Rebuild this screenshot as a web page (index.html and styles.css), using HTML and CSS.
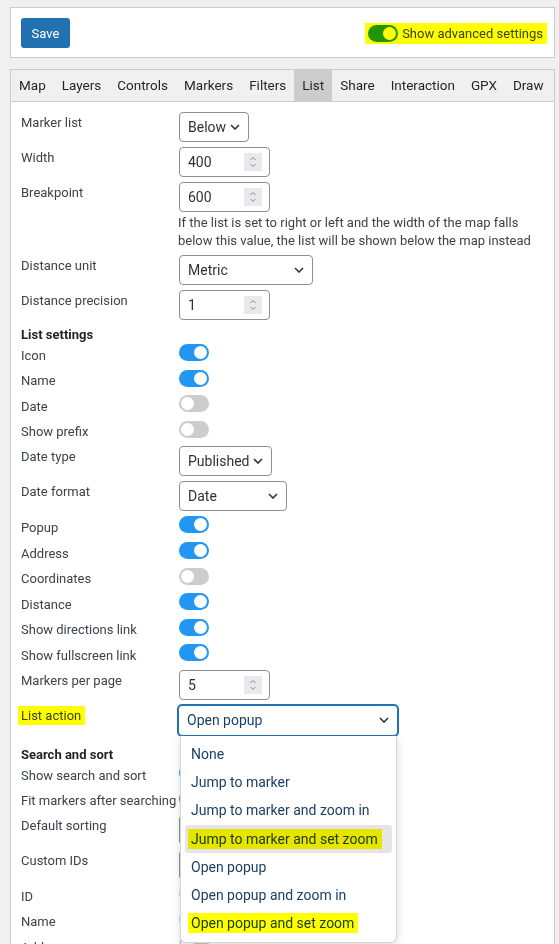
FILE: index.html
```html
<!DOCTYPE html>
<html lang="en">
<head>
    <meta charset="UTF-8">
    <meta name="viewport" content="width=device-width, initial-scale=1.0">
    <title>Map settings - List</title>
    <link rel="stylesheet" href="styles.css">
</head>
<body>

    <div class="topbar">
        <button type="button" class="btn-save">Save</button>
        <label class="advanced hl">
            <span class="switch on"></span>
            Show advanced settings
        </label>
    </div>

    <div class="panel">
        <ul class="tabs">
            <li>Map</li>
            <li>Layers</li>
            <li>Controls</li>
            <li>Markers</li>
            <li>Filters</li>
            <li class="active">List</li>
            <li>Share</li>
            <li>Interaction</li>
            <li>GPX</li>
            <li>Draw</li>
        </ul>

        <div class="tab-body">
            <div class="row">
                <div class="lbl">Marker list</div>
                <div class="select w-below"><span>Below</span><svg class="chev" width="10" height="6" viewBox="0 0 10 6"><path d="M1 1l4 4 4-4"/></svg></div>
            </div>
            <div class="row">
                <div class="lbl">Width</div>
                <div class="num"><span>400</span><span class="spin"><svg width="8" height="14" viewBox="0 0 8 14"><path d="M1.5 5l2.5-2.5 2.5 2.5M1.5 9l2.5 2.5 2.5-2.5"/></svg></span></div>
            </div>
            <div class="row">
                <div class="lbl">Breakpoint</div>
                <div class="ctrl">
                    <div class="num"><span>600</span><span class="spin"><svg width="8" height="14" viewBox="0 0 8 14"><path d="M1.5 5l2.5-2.5 2.5 2.5M1.5 9l2.5 2.5 2.5-2.5"/></svg></span></div>
                    <p class="help">If the list is set to right or left and the width of the map falls below this value, the list will be shown below the map instead</p>
                </div>
            </div>
            <div class="row">
                <div class="lbl">Distance unit</div>
                <div class="select w-metric"><span>Metric</span><svg class="chev" width="10" height="6" viewBox="0 0 10 6"><path d="M1 1l4 4 4-4"/></svg></div>
            </div>
            <div class="row">
                <div class="lbl">Distance precision</div>
                <div class="num"><span>1</span><span class="spin"><svg width="8" height="14" viewBox="0 0 8 14"><path d="M1.5 5l2.5-2.5 2.5 2.5M1.5 9l2.5 2.5 2.5-2.5"/></svg></span></div>
            </div>

            <h3 class="section">List settings</h3>
            <div class="row toggle-row"><div class="lbl">Icon</div><span class="switch on"></span></div>
            <div class="row toggle-row"><div class="lbl">Name</div><span class="switch on"></span></div>
            <div class="row toggle-row"><div class="lbl">Date</div><span class="switch"></span></div>
            <div class="row toggle-row"><div class="lbl">Show prefix</div><span class="switch"></span></div>
            <div class="row">
                <div class="lbl">Date type</div>
                <div class="select w-published"><span>Published</span><svg class="chev" width="10" height="6" viewBox="0 0 10 6"><path d="M1 1l4 4 4-4"/></svg></div>
            </div>
            <div class="row">
                <div class="lbl">Date format</div>
                <div class="select w-date"><span>Date</span><svg class="chev" width="10" height="6" viewBox="0 0 10 6"><path d="M1 1l4 4 4-4"/></svg></div>
            </div>
            <div class="row toggle-row"><div class="lbl">Popup</div><span class="switch on"></span></div>
            <div class="row toggle-row"><div class="lbl">Address</div><span class="switch on"></span></div>
            <div class="row toggle-row"><div class="lbl">Coordinates</div><span class="switch"></span></div>
            <div class="row toggle-row"><div class="lbl">Distance</div><span class="switch on"></span></div>
            <div class="row toggle-row"><div class="lbl">Show directions link</div><span class="switch on"></span></div>
            <div class="row toggle-row"><div class="lbl">Show fullscreen link</div><span class="switch on"></span></div>
            <div class="row">
                <div class="lbl">Markers per page</div>
                <div class="num"><span>5</span><span class="spin"><svg width="8" height="14" viewBox="0 0 8 14"><path d="M1.5 5l2.5-2.5 2.5 2.5M1.5 9l2.5 2.5 2.5-2.5"/></svg></span></div>
            </div>
            <div class="row">
                <div class="lbl"><span class="hl">List action</span></div>
                <div class="ctrl dropdown-wrap">
                    <div class="select focused w-action"><span>Open popup</span><svg class="chev" width="10" height="6" viewBox="0 0 10 6"><path d="M1 1l4 4 4-4"/></svg></div>
                    <ul class="options">
                        <li>None</li>
                        <li>Jump to marker</li>
                        <li>Jump to marker and zoom in</li>
                        <li class="hover"><span class="hl">Jump to marker and set zoom</span></li>
                        <li>Open popup</li>
                        <li>Open popup and zoom in</li>
                        <li><span class="hl">Open popup and set zoom</span></li>
                    </ul>
                </div>
            </div>

            <h3 class="section section-gap">Search and sort</h3>
            <div class="row toggle-row"><div class="lbl">Show search and sort</div><span class="switch on"></span></div>
            <div class="row toggle-row"><div class="lbl">Fit markers after searching</div><span class="switch on"></span></div>
            <div class="row">
                <div class="lbl">Default sorting</div>
                <div class="select w-metric"><span>Name</span><svg class="chev" width="10" height="6" viewBox="0 0 10 6"><path d="M1 1l4 4 4-4"/></svg></div>
            </div>
            <div class="row">
                <div class="lbl">Custom IDs</div>
                <div class="select w-metric"><span>None</span><svg class="chev" width="10" height="6" viewBox="0 0 10 6"><path d="M1 1l4 4 4-4"/></svg></div>
            </div>
            <div class="row toggle-row"><div class="lbl">ID</div><span class="switch"></span></div>
            <div class="row toggle-row"><div class="lbl">Name</div><span class="switch"></span></div>
            <div class="row toggle-row"><div class="lbl">Address</div><span class="switch"></span></div>
            <div class="row toggle-row"><div class="lbl">Popup</div><span class="switch"></span></div>
        </div>
    </div>

</body>
</html>
```

FILE: styles.css
```css
body {
    font-family: Roboto, "Noto Sans", sans-serif;
    font-size: 13px;
    margin: 0;
    padding: 7px 4px 0 10px;
    background: #f0f0f1;
    color: #3c434a;
}
.topbar {
    display: flex;
    align-items: center;
    justify-content: space-between;
    background: #fff;
    border: 1px solid #ccc;
    padding: 10px 10px 9px 10px;
}
.btn-save {
    font-family: inherit;
    font-size: 13px;
    width: 49px;
    height: 30px;
    padding: 0;
    border: none;
    border-radius: 3px;
    background: #2271b1;
    color: #fff;
}
.advanced {
    display: flex;
    align-items: center;
    gap: 4px;
    margin-right: 1px;
    color: #3c434a;
}

/* highlighter marks, drawn over the text */
.hl {
    position: relative;
}
.hl::after {
    content: "";
    position: absolute;
    left: -3px;
    right: -4px;
    top: -2px;
    bottom: -2px;
    background: #ffff00;
    mix-blend-mode: multiply;
    pointer-events: none;
}

.panel {
    margin-top: 11px;
    border: 1px solid #ccc;
    background: #fff;
    min-height: 900px;
}
.tabs {
    display: flex;
    list-style: none;
    margin: 0;
    padding: 0;
    background: #f0f0f0;
    border-bottom: 1px solid #ccc;
}
.tabs li {
    font-size: 13.5px;
    line-height: 31px;
    padding: 0 8px;
    color: #1d2327;
}
.tabs li.active {
    background: #ccc;
}
.tab-body {
    padding: 10px 10px 0 10px;
}
.row {
    display: flex;
    align-items: flex-start;
    margin-bottom: 5px;
}
.lbl {
    width: 158px;
    flex: none;
    padding-top: 2px;
    line-height: 18px;
    white-space: nowrap;
}
.toggle-row {
    height: 20.6px;
}
.toggle-row .lbl {
    padding-top: 2.6px;
}
.section {
    font-size: 13px;
    font-weight: 700;
    color: #1d2327;
    line-height: 18px;
    margin: 0;
    padding-top: 1px;
}
.section-gap {
    padding-top: 5px;
}

.switch {
    position: relative;
    display: inline-block;
    width: 30px;
    height: 17px;
    border-radius: 9px;
    background: #ccc;
    flex: none;
}
.switch::before {
    content: "";
    position: absolute;
    top: 2px;
    left: 2px;
    width: 13px;
    height: 13px;
    border-radius: 50%;
    background: #fff;
}
.switch.on {
    background: #2196f3;
}
.switch.on::before {
    left: 15px;
}

.select,
.num {
    box-sizing: border-box;
    display: flex;
    align-items: center;
    justify-content: space-between;
    height: 30px;
    border: 1px solid #8c8f94;
    border-radius: 4px;
    font-size: 14px;
    color: #2c3338;
    background: #fff;
}
.select {
    padding: 0 8px 0 8px;
}
.chev path {
    fill: none;
    stroke: #2c3338;
    stroke-width: 1.6;
}
.w-below { width: 70px; }
.w-metric { width: 134px; }
.w-published { width: 93px; }
.w-date { width: 108px; }
.w-action { width: 220px; margin-left: -1px; height: 31px; }
.select.focused {
    border: 1px solid #2271b1;
    box-shadow: 0 0 0 1px #2271b1;
    color: #1c3f63;
}
.num {
    width: 91px;
    padding: 0 7px 0 8px;
}
.spin {
    display: flex;
    align-items: center;
    justify-content: center;
    width: 18px;
    height: 18px;
    background: #e9e9ed;
}
.spin path {
    fill: none;
    stroke: #8a8a8f;
    stroke-width: 1;
}
.help {
    margin: 2px 0 0 -1px;
    line-height: 18px;
    width: 366px;
}

.dropdown-wrap {
    position: relative;
}
.options {
    position: absolute;
    top: 31px;
    left: 1px;
    width: 217px;
    box-sizing: border-box;
    margin: 0;
    padding: 4px 4px 5px 4px;
    list-style: none;
    background: #fff;
    border: 1px solid #d6d6d6;
    border-top: none;
    border-radius: 0 0 6px 6px;
    box-shadow: 0 3px 8px rgba(0, 0, 0, 0.14);
    z-index: 5;
}
.options li {
    font-size: 14px;
    line-height: 28.2px;
    padding: 0 6px;
    color: #1c3f63;
    border-radius: 3px;
}
.options li.hover {
    background: #e5e5e5;
}
```
